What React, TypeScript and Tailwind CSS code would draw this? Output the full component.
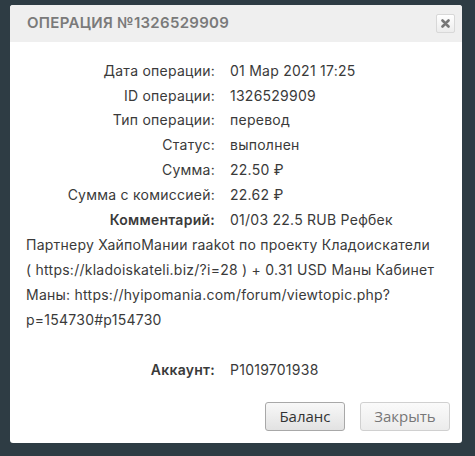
import React from "react";

const rows: [string, string][] = [
  ["Дата операции:", "01 Мар 2021 17:25"],
  ["ID операции:", "1326529909"],
  ["Тип операции:", "перевод"],
  ["Статус:", "выполнен"],
  ["Сумма:", "22.50 ₽"],
  ["Сумма с комиссией:", "22.62 ₽"],
];

export default function App() {
  return (
    <div className="w-[475px] h-[456px] bg-[#2e3c44] pt-[5px] pl-[10px] overflow-hidden" style={{ fontFamily: "Inter, 'Open Sans', sans-serif" }}>
      <div className="w-[452px] h-[438px] bg-white rounded-[3px] flex flex-col overflow-hidden">
        <div className="h-[37px] bg-[#efefef] flex items-center justify-between pl-[17px] pr-[7px] shrink-0">
          <div className="text-[15px] font-semibold tracking-[0.3px] text-[#7a7a7a]">ОПЕРАЦИЯ №1326529909</div>
          <button className="w-[19px] h-[19px] border border-[#d8d8d8] rounded-[2px] bg-gradient-to-b from-white to-[#ececec] flex items-center justify-center">
            <svg width="9" height="9" viewBox="0 0 9 9">
              <path d="M1.5 1.5 L7.5 7.5 M7.5 1.5 L1.5 7.5" stroke="#777" strokeWidth="2.6" strokeLinecap="round" />
            </svg>
          </button>
        </div>
        <div className="pt-[17px] px-[16px] text-[14px] text-[#3a3a3a] leading-[24.7px] tracking-[0.25px]">
          {rows.map(([l, v]) => (
            <div key={l} className="flex">
              <div className="w-[189px] text-right shrink-0">{l}</div>
              <div className="ml-[15px]">{v}</div>
            </div>
          ))}
          <div className="leading-[25px]">
            <span className="inline-block w-[189px] text-right font-semibold">Комментарий:</span>
            <span className="ml-[15px]">01/03 22.5 RUB Рефбек</span>
            <br />
            Партнеру ХайпоМании raakot по проекту Кладоискатели
            <br />( https://kladoiskateli.biz/?i=28 ) + 0.31 USD Маны Кабинет
            <br />
            Маны: https://hyipomania.com/forum/viewtopic.php?
            <br />
            p=154730#p154730
          </div>
          <div className="flex mt-[25px] leading-[25px]">
            <div className="w-[189px] text-right shrink-0 font-semibold">Аккаунт:</div>
            <div className="ml-[15px]">P1019701938</div>
          </div>
        </div>
        <div className="flex justify-end gap-[15px] pr-[12px] mt-[20px]" style={{ fontFamily: "'Open Sans', sans-serif" }}>
          <button className="w-[80px] h-[29px] rounded-[3px] border border-[#a8a8a8] bg-gradient-to-b from-[#f8f8f8] to-[#e2e2e2] text-[15px] text-[#333]">Баланс</button>
          <button className="w-[90px] h-[29px] rounded-[3px] border border-[#d0d0d0] bg-gradient-to-b from-[#fafafa] to-[#ececec] text-[15px] text-[#777]">Закрыть</button>
        </div>
      </div>
    </div>
  );
}
